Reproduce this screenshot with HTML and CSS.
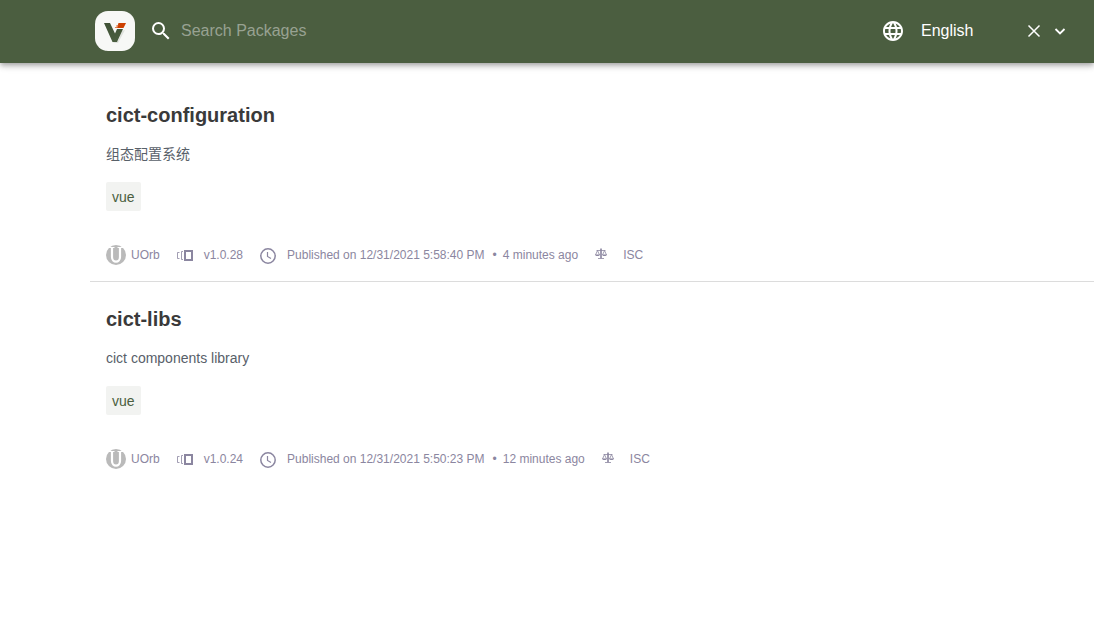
FILE: index.html
```html
<!DOCTYPE html>
<html lang="en">
<head>
<meta charset="utf-8">
<meta name="viewport" content="width=device-width, initial-scale=1">
<title>Packages</title>
<link rel="stylesheet" href="styles.css">
</head>
<body>
<svg class="sprite" aria-hidden="true">
  <symbol id="avatar" viewBox="0 0 20 20"><circle cx="10" cy="10" r="10" fill="#bababa"/><path d="M3 2.500h5.500M11.500 2.500H17" fill="none" stroke="#fff" stroke-width="1"/><path d="M6 2.500v9.500c0 6.200 8 6.200 8 0V2.500" fill="none" stroke="#fff" stroke-width="2.200"/></symbol>
  <symbol id="version" viewBox="0 0 16 18"><path d="M7 4h9v11H7zM9 6v7h5V6z" fill="currentColor" fill-rule="evenodd"/><path d="M6 5.500H4.500v8H6M2.500 6.500h-2v6h2" fill="none" stroke="currentColor" opacity=".8"/></symbol>
  <symbol id="clock" viewBox="0 0 16 18"><circle cx="8" cy="10" r="7.200" fill="none" stroke="currentColor" stroke-width="1.500"/><path d="M7.500 6v4.500l3.500 2" fill="none" stroke="currentColor" stroke-width="1.200"/></symbol>
  <symbol id="scale" viewBox="0 0 12 14"><path d="M6 0v10.500M3 10.500h6M1.500 2.500h9M2.500 2.500l-2 4.500M2.500 2.500l2 4.500M9.500 2.500l-2 4.500M9.500 2.500l2 4.500" fill="none" stroke="currentColor" stroke-width=".8"/><path d="M5.300 1h1.400v9H5.300zM0 6.500h5c-.5 2-4.500 2-5 0zM7 6.500h5c-.5 2-4.500 2-5 0z" fill="currentColor"/></symbol>
</svg>
<header class="header">
  <div class="container header-inner">
    <a class="logo" href="#" aria-label="Home">
      <svg viewBox="0 0 40 40" width="40" height="40">
        <defs><linearGradient id="shade" x2="0" y2="1"><stop offset="0" stop-color="#405236"/><stop offset="1" stop-color="#4a5e3f"/></linearGradient></defs>
        <rect width="40" height="40" rx="13" fill="#f7f8f6"/>
        <path d="M17 32l6 0 7-13-3 1-4 10z" fill="#dfe2dd"/>
        <path d="M9 12h6l5 10.500L22 18h6l-6 13h-4.500z" fill="url(#shade)"/>
        <path d="M23.500 12H31l-2.500 5h-6.500z" fill="#cd4000"/>
        <path d="M21.500 14.200h2l-.6 1.200h-2zM20.300 16h2l-.5 1h-2z" fill="#e0743f"/>
      </svg>
    </a>
    <label class="search">
      <svg viewBox="0 0 24 24" width="24" height="24" aria-hidden="true"><path fill="currentColor" d="M15.500 14h-.79l-.28-.27A6.471 6.471 0 0 0 16 9.500 6.500 6.500 0 1 0 9.500 16c1.610 0 3.090-.59 4.230-1.570l.27.28v.79l5 4.990L20.490 19l-4.990-5zm-6 0C7.010 14 5 11.990 5 9.500S7.010 5 9.500 5 14 7.010 14 9.500 11.990 14 9.500 14z"/></svg>
      <input class="field" type="text" placeholder="Search Packages" aria-label="Search Packages">
    </label>
    <div class="language">
      <svg viewBox="0 0 24 24" width="24" height="24" aria-hidden="true"><path fill="currentColor" d="M11.990 2C6.470 2 2 6.480 2 12s4.470 10 9.990 10C17.520 22 22 17.520 22 12S17.520 2 11.990 2zm6.930 6h-2.950a15.650 15.650 0 0 0-1.380-3.560A8.030 8.030 0 0 1 18.920 8zM12 4.040c.83 1.200 1.480 2.530 1.910 3.960h-3.820c.43-1.430 1.080-2.760 1.910-3.960zM4.260 14C4.100 13.360 4 12.690 4 12s.1-1.360.26-2h3.380c-.08.66-.14 1.320-.14 2s.06 1.340.14 2H4.260zm.82 2h2.950c.32 1.250.78 2.450 1.380 3.560A7.987 7.987 0 0 1 5.080 16zm2.950-8H5.080a7.987 7.987 0 0 1 4.330-3.560A15.650 15.650 0 0 0 8.030 8zM12 19.960c-.83-1.200-1.480-2.530-1.910-3.960h3.820c-.43 1.430-1.080 2.760-1.910 3.960zM14.340 14H9.660c-.09-.66-.16-1.320-.16-2s.07-1.350.16-2h4.680c.09.65.16 1.320.16 2s-.07 1.340-.16 2zm.25 5.560c.6-1.110 1.060-2.310 1.380-3.560h2.950a8.030 8.030 0 0 1-4.330 3.560zM16.360 14c.08-.66.14-1.320.14-2s-.06-1.340-.14-2h3.380c.16.64.26 1.310.26 2s-.1 1.360-.26 2h-3.380z"/></svg>
      <input class="field language-field" type="text" value="English" aria-label="Language">
      <button class="icon-button" type="button" aria-label="Clear"><svg viewBox="0 0 20 20" width="20" height="20"><path d="M4.500 4.500l11 11M15.500 4.500l-11 11" stroke="currentColor" stroke-width="1.500"/></svg></button>
      <button class="icon-button" type="button" aria-label="Open"><svg viewBox="0 0 20 20" width="20" height="20"><path d="M5.500 8l4.500 4.500L14.500 8" fill="none" stroke="currentColor" stroke-width="1.800"/></svg></button>
    </div>
  </div>
</header>
<main class="container packages">
  <article class="package">
    <h2 class="title">cict-configuration</h2>
    <p class="description" lang="zh">组态配置系统</p>
    <span class="tag">vue</span>
    <div class="meta">
      <span class="author"><svg class="avatar"><use href="#avatar"/></svg>UOrb</span>
      <span class="detail"><svg class="icon"><use href="#version"/></svg>v1.0.28</span>
      <span class="detail"><svg class="icon"><use href="#clock"/></svg><span class="published">Published on 12/31/2021 5:58:40 PM<span class="dot">•</span>4 minutes ago</span></span>
      <span class="license"><svg class="scale"><use href="#scale"/></svg>ISC</span>
    </div>
  </article>
  <article class="package">
    <h2 class="title">cict-libs</h2>
    <p class="description">cict components library</p>
    <span class="tag">vue</span>
    <div class="meta">
      <span class="author"><svg class="avatar"><use href="#avatar"/></svg>UOrb</span>
      <span class="detail"><svg class="icon"><use href="#version"/></svg>v1.0.24</span>
      <span class="detail"><svg class="icon"><use href="#clock"/></svg><span class="published">Published on 12/31/2021 5:50:23 PM<span class="dot">•</span>12 minutes ago</span></span>
      <span class="license"><svg class="scale"><use href="#scale"/></svg>ISC</span>
    </div>
  </article>
</main>
</body>
</html>
```
FILE: styles.css
```css
* { box-sizing: border-box; }
body {
  margin: 0;
  background: #fff;
  font-family: "Liberation Sans", "Noto Sans CJK SC", Arial, sans-serif;
}
.sprite { display: none; }
svg { display: block; flex: none; }
.container { padding-left: 90px; }
.header {
  background: #4b5e40;
  color: #fff;
  box-shadow: 0 2px 4px -1px rgba(0, 0, 0, .2), 0 4px 5px rgba(0, 0, 0, .14), 0 1px 10px rgba(0, 0, 0, .12);
}
.header-inner {
  display: flex;
  align-items: center;
  min-height: 63px;
  padding-left: 95px;
  padding-right: 21px;
  padding-bottom: 1px;
}
.logo { margin-right: 14px; }
.search {
  display: flex;
  flex: 1;
  align-items: center;
  gap: 8px;
}
.field {
  flex: 1;
  min-width: 0;
  padding: 0;
  border: 0;
  outline: 0;
  background: transparent;
  color: #fff;
  font: 16px/20px "Liberation Sans", Arial, sans-serif;
}
.field::placeholder { color: #98a292; opacity: 1; }
.language { display: flex; align-items: center; }
.language-field { flex: none; width: 100px; margin-left: 16px; }
.icon-button {
  padding: 0 3px;
  border: 0;
  background: none;
  color: inherit;
}
.packages { padding-top: 15px; }
.package { padding: 16px; border-bottom: 1px solid #dcdcdc; }
.package:last-child { border-bottom: 0; }
.title {
  margin: 0 0 8px;
  color: #3a3a3a;
  font-size: 20px;
  line-height: 42px;
}
.description {
  margin: 0 0 18px;
  color: #586069;
  font-size: 14px;
  line-height: 20px;
}
.tag {
  display: block;
  width: fit-content;
  padding: 1px 6px 0;
  border-radius: 2px;
  background: #f2f3f1;
  color: #4b5e40;
  font-size: 14px;
  line-height: 28px;
}
.meta {
  display: flex;
  align-items: center;
  gap: 17px;
  margin-top: 34px;
  color: #8b86a0;
  font-size: 12px;
  line-height: 20px;
}
.author, .detail, .license { display: flex; align-items: center; }
.author { gap: 5px; }
.detail { gap: 11px; }
.license { gap: 16px; }
.avatar { width: 20px; height: 20px; }
.icon { width: 16px; height: 18px; }
.scale { width: 12px; height: 14px; }
.dot { margin: 0 6px 0 8px; }
```
